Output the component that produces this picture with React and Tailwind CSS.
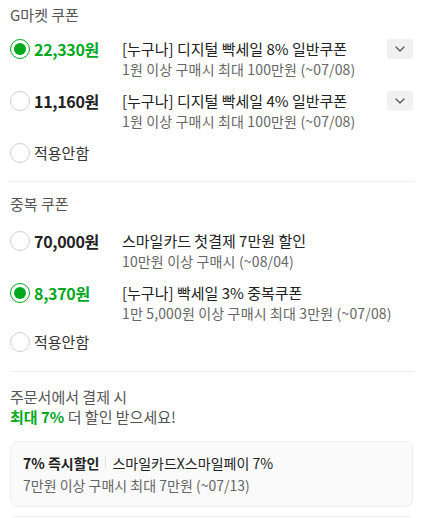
const FONT = { fontFamily: '"Noto Sans CJK KR", "Noto Sans", sans-serif' };

function Radio({ checked }) {
  return checked ? (
    <span className="flex h-5 w-5 shrink-0 items-center justify-center rounded-full border-[1.5px] border-[#00a81e] bg-white">
      <span className="h-3 w-3 rounded-full bg-[#00a81e]" />
    </span>
  ) : (
    <span className="h-5 w-5 shrink-0 rounded-full border border-[#cfcfcf] bg-white" />
  );
}

function Chevron() {
  return (
    <button className="flex h-5 w-[26px] shrink-0 items-center justify-center rounded-[3px] bg-[#f1f1f1]">
      <svg width="10" height="6" viewBox="0 0 10 6" fill="none">
        <path d="M1 1l4 4 4-4" stroke="#555" strokeWidth="1.2" strokeLinecap="round" strokeLinejoin="round" />
      </svg>
    </button>
  );
}

function CouponRow({ checked, amount, title, sub, more, className = "" }) {
  return (
    <div className={`flex items-start ${className}`}>
      <div className="flex h-5 w-[112px] shrink-0 items-center gap-1">
        <Radio checked={checked} />
        <span className={`text-[16px] font-bold leading-5 tracking-[-0.3px] ${checked ? "text-[#00a81e]" : "text-[#222]"}`}>
          {amount}
        </span>
      </div>
      <div className="flex-1 min-w-0">
        <div className="text-[15px] leading-5 text-[#222]">{title}</div>
        <div className="text-[14px] leading-5 tracking-[0.15px] text-[#666]">{sub}</div>
      </div>
      {more && <Chevron />}
    </div>
  );
}

function NoneRow({ className = "" }) {
  return (
    <div className={`flex h-5 items-center gap-1 ${className}`}>
      <Radio />
      <span className="text-[15px] leading-5 text-[#333]">적용안함</span>
    </div>
  );
}

export default function App() {
  return (
    <div className="w-[431px] bg-white pl-[10px] pr-[18px] pt-[5px]" style={FONT}>
      {/* G마켓 쿠폰 */}
      <section className="flex flex-col gap-3 pb-[18px]">
        <h3 className="mb-[2px] text-[15px] leading-5 text-[#555]">G마켓 쿠폰</h3>
        <CouponRow
          checked
          amount="22,330원"
          title="[누구나] 디지털 빡세일 8% 일반쿠폰"
          sub="1원 이상 구매시 최대 100만원 (~07/08)"
          more
        />
        <CouponRow
          amount="11,160원"
          title="[누구나] 디지털 빡세일 4% 일반쿠폰"
          sub="1원 이상 구매시 최대 100만원 (~07/08)"
          more
        />
        <NoneRow />
      </section>

      <div className="h-px bg-[#eeeeee]" />

      {/* 중복 쿠폰 */}
      <section className="flex flex-col gap-3 pt-[12px] pb-[19px]">
        <h3 className="mb-[5px] text-[15px] leading-5 text-[#555]">중복 쿠폰</h3>
        <CouponRow
          amount="70,000원"
          title="스마일카드 첫결제 7만원 할인"
          sub="10만원 이상 구매시 (~08/04)"
        />
        <CouponRow
          checked
          amount="8,370원"
          title="[누구나] 빡세일 3% 중복쿠폰"
          sub="1만 5,000원 이상 구매시 최대 3만원 (~07/08)"
        />
        <NoneRow className="-mt-[3px]" />
      </section>

      <div className="h-px bg-[#eeeeee]" />

      {/* 결제 혜택 */}
      <section className="pt-[15px]">
        <p className="text-[15px] leading-5 text-[#555]">주문서에서 결제 시</p>
        <p className="text-[15px] leading-5 text-[#555]">
          <span className="font-bold text-[#00a81e]">최대 7%</span> 더 할인 받으세요!
        </p>
        <div className="mt-[14px] rounded-lg border border-[#eeeeee] bg-[#fafafa] px-3 pt-[10px] pb-[10px]">
          <div className="flex items-center text-[14px] leading-[22px] text-[#222]">
            <span className="font-bold">7% 즉시할인</span>
            <span className="mx-[6px] h-3 w-px bg-[#e2e2e2]" />
            <span>스마일카드X스마일페이 7%</span>
          </div>
          <div className="text-[14px] leading-[22px] text-[#666]">7만원 이상 구매시 최대 7만원 (~07/13)</div>
        </div>
      </section>
      <div className="mx-[3px] mt-[9px] h-px bg-[#eeeeee]" />
    </div>
  );
}
